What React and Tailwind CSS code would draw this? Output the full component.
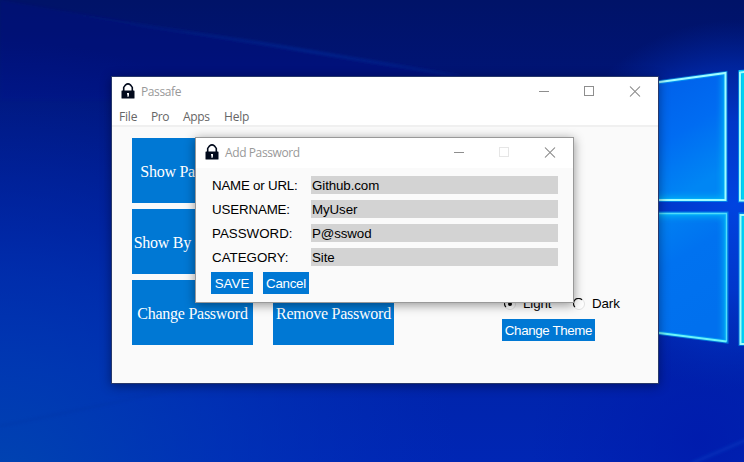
import React from 'react';

function Wallpaper() {
  return (
    <svg className="absolute inset-0" width="744" height="462" viewBox="0 0 744 462">
      <defs>
        <linearGradient id="sky" x1="0" y1="0" x2="0" y2="1">
          <stop offset="0" stopColor="#001368" />
          <stop offset="0.18" stopColor="#001476" />
          <stop offset="0.5" stopColor="#001790" />
          <stop offset="0.8" stopColor="#0024aa" />
          <stop offset="1" stopColor="#0026b4" />
        </linearGradient>
        <radialGradient id="corner" gradientUnits="userSpaceOnUse" cx="0" cy="500" r="460">
          <stop offset="0" stopColor="#0048b0" stopOpacity="0.95" />
          <stop offset="0.5" stopColor="#0038b8" stopOpacity="0.6" />
          <stop offset="1" stopColor="#0030b8" stopOpacity="0" />
        </radialGradient>
        <radialGradient id="glow" gradientUnits="userSpaceOnUse" cx="735" cy="205" r="185">
          <stop offset="0" stopColor="#0044e0" />
          <stop offset="0.45" stopColor="#003cd4" stopOpacity="0.85" />
          <stop offset="0.75" stopColor="#0034c4" stopOpacity="0.5" />
          <stop offset="1" stopColor="#002cb0" stopOpacity="0" />
        </radialGradient>
        <radialGradient id="floor" gradientUnits="userSpaceOnUse" cx="700" cy="440" r="170">
          <stop offset="0" stopColor="#001aac" stopOpacity="0.8" />
          <stop offset="1" stopColor="#001cae" stopOpacity="0" />
        </radialGradient>
        <linearGradient id="paneTop" x1="0" y1="0" x2="0.5" y2="1">
          <stop offset="0" stopColor="#005be6" />
          <stop offset="0.6" stopColor="#006cf2" />
          <stop offset="1" stopColor="#0086f4" />
        </linearGradient>
        <linearGradient id="paneBottom" x1="0" y1="0" x2="0.5" y2="1">
          <stop offset="0" stopColor="#0088f4" />
          <stop offset="0.5" stopColor="#0072f0" />
          <stop offset="1" stopColor="#0070ee" />
        </linearGradient>
        <filter id="soft" x="-20%" y="-20%" width="140%" height="140%">
          <feGaussianBlur stdDeviation="3" />
        </filter>
        <filter id="beam" x="-20%" y="-20%" width="140%" height="140%">
          <feGaussianBlur stdDeviation="1.6" />
        </filter>
        <linearGradient id="beamFade" gradientUnits="userSpaceOnUse" x1="60" y1="0" x2="480" y2="0">
          <stop offset="0" stopColor="#0a36a8" stopOpacity="0" />
          <stop offset="0.6" stopColor="#0a36a8" stopOpacity="0.55" />
          <stop offset="1" stopColor="#0a36a8" stopOpacity="0.2" />
        </linearGradient>
        <clipPath id="panes">
          <path d="M620 87 L726 72 V201 H620Z M620 213 H727 V342 L620 329Z M739 70 H744 V201 H739Z M740 214 H744 V344 H740Z" />
        </clipPath>
      </defs>
      <rect width="744" height="462" fill="url(#sky)" />
      <path d="M0 0 L160 28 L260 43 L350 58 L460 76 V100 H0Z" fill="#00108a" opacity="0.3" filter="url(#beam)" />
      <rect width="744" height="462" fill="url(#corner)" />
      <rect width="744" height="462" fill="url(#floor)" />
      <rect width="744" height="462" fill="url(#glow)" />
      <path d="M60 12 L160 28 L260 43 L350 58 L460 76" fill="none" stroke="url(#beamFade)" strokeWidth="2.5" filter="url(#beam)" />
      <path d="M0 426 Q90 408 200 384" fill="none" stroke="#0030a0" strokeWidth="2" opacity="0.3" filter="url(#beam)" />
      <path d="M690 464 L746 440" fill="none" stroke="#0844c8" strokeWidth="3" opacity="0.4" filter="url(#beam)" />
      <path d="M620 87 L726 72 V201 H620Z" fill="url(#paneTop)" />
      <path d="M620 213 H727 V342 L620 329Z" fill="url(#paneBottom)" />
      <path d="M739 70 H750 V201 H739Z M740 214 H750 V344 H740Z" fill="#00d4f0" />
      <g clipPath="url(#panes)">
        <path d="M726 72 V201 H620 M620 213 H727 V342" fill="none" stroke="#00c8fa" strokeWidth="8" opacity="0.65" filter="url(#soft)" />
      </g>
      <path d="M620 87.5 L725.5 73 V200 H620 M620 213.5 H726.5 V341.5 L620 328 M750 70.5 L740 72 V200.5 H750 M750 214.5 H740.5 V344 H750" fill="none" stroke="#00b4fa" strokeWidth="4" opacity="0.55" />
      <path d="M620 87.5 L725.5 73 V200 H620" fill="none" stroke="#9ffcff" strokeWidth="2" />
      <path d="M750 71 L740 72.5 V200.5 H750 M750 215 H740.5 V344 H750" fill="none" stroke="#a4fff8" strokeWidth="2" />
      <path d="M620 213.5 H726.5 V341.5" fill="none" stroke="#50dcfa" strokeWidth="1.4" />
      <path d="M726.5 341.5 L620 328" fill="none" stroke="#6cf4f8" strokeWidth="2" />
    </svg>
  );
}

function Lock() {
  return (
    <svg className="mt-[6px] block" width="16" height="16" viewBox="0 0 16 16">
      <path d="M3.7 8 V4.4 L5.6 1.8 Q8 0 10.4 1.8 L12.3 4.4 V8" fill="none" stroke="#020a1c" strokeWidth="1.6" />
      <rect x="1.5" y="7.5" width="13" height="8" rx="0.6" fill="#020a1c" />
      <path d="M7 10 H9 V12 L8.6 13.7 H7.4 V12 L7 11Z" fill="#fff" />
    </svg>
  );
}

function Controls({ disabled }) {
  return (
    <svg className="ml-auto block" width="138" height="30" viewBox="0 0 138 30" fill="none" shapeRendering="crispEdges">
      <path d="M19 14.5 H29" stroke="#8e8e8e" />
      <rect x="64.5" y="9.5" width="9" height="9" stroke={disabled ? '#e6e6e6' : '#8e8e8e'} />
      <path d="M110 9.5 L120 19.5 M120 9.5 L110 19.5" stroke="#7c7c7c" strokeWidth="1.05" shapeRendering="auto" />
    </svg>
  );
}

function TitleBar({ title, disabled, spacing }) {
  return (
    <div className="flex h-[30px] bg-white pl-[8px]">
      <Lock />
      <span className={`ml-[5px] font-['Open_Sans','Noto_Sans',sans-serif] text-[12px] leading-[30px] whitespace-nowrap text-[#999999] ${spacing}`}>{title}</span>
      <Controls disabled={disabled} />
    </div>
  );
}

function Tile({ children }) {
  return (
    <button className="flex h-[65px] w-[121px] items-center justify-center overflow-hidden bg-[#0078d4] pt-[3px] font-['Liberation_Serif',serif] text-[16px] leading-[18px] tracking-[-0.26px] whitespace-nowrap text-white">
      {children}
    </button>
  );
}

function Action({ children, width }) {
  return (
    <button className={`flex h-[22px] items-center justify-center bg-[#0078d4] pt-px text-[13.33px] leading-[16px] whitespace-nowrap text-white ${width}`}>
      {children}
    </button>
  );
}

function Radio({ checked }) {
  return (
    <svg width="12" height="12" viewBox="0 0 12 12" className="block">
      <circle cx="6" cy="6" r="5.5" fill="#fff" stroke="#e2e2e2" />
      <path d="M1.9 9 A5 5 0 0 1 9 1.9" fill="none" stroke="#111" strokeWidth="1.3" />
      {checked && <circle cx="6" cy="6" r="2" fill="#000" />}
    </svg>
  );
}

const fields = [
  ['NAME or URL:', 'Github.com', 'tracking-[-0.22px]'],
  ['USERNAME:', 'MyUser', 'tracking-[-0.15px]'],
  ['PASSWORD:', 'P@sswod', 'tracking-[0px]'],
  ['CATEGORY:', 'Site', 'tracking-[0px]'],
];

function MainWindow() {
  return (
    <div className="absolute left-[111px] top-[76px] h-[308px] w-[548px] border border-[#27386b] bg-[#fafafa] bg-clip-padding shadow-[0_2px_10px_rgba(0,0,30,0.45)]">
      <TitleBar title="Passafe" spacing="tracking-[-0.4px]" />
      <div className="flex h-[20px] border-b-2 border-[#f0f0f0] bg-white font-['Open_Sans','Noto_Sans',sans-serif] text-[12px] leading-[20px] text-[#666666]">
        <span className="ml-[7px] w-[32px] tracking-[-0.2px]">File</span>
        <span className="w-[32px] tracking-[-0.4px]">Pro</span>
        <span className="w-[41px] tracking-[-0.3px]">Apps</span>
        <span className="tracking-[-0.2px]">Help</span>
      </div>
      <div className="flex pt-[11px] pl-[20px]">
        <div className="grid grid-cols-[121px_121px] gap-x-[20px] gap-y-[6px]">
          <Tile>Show Passwords</Tile>
          <Tile />
          <Tile>Show By Category</Tile>
          <Tile />
          <Tile>Change Password</Tile>
          <Tile>Remove Password</Tile>
        </div>
        <div className="ml-[108px] flex flex-col items-start pt-[158px]">
          <div className="flex h-[16px] items-center text-[13.33px] leading-[16px] tracking-[-0.1px] text-black">
            <span className="ml-[2px]"><Radio checked /></span>
            <span className="ml-[7px] w-[50px]">Light</span>
            <Radio />
            <span className="ml-[7px]">Dark</span>
          </div>
          <div className="mt-[7px]"><Action width="w-[93px] tracking-[-0.36px]">Change Theme</Action></div>
        </div>
      </div>
    </div>
  );
}

function AddPasswordDialog() {
  return (
    <div className="absolute left-[195px] top-[137px] h-[166px] w-[379px] border border-[#999999] bg-[#fafafa] shadow-[0_2px_10px_rgba(0,0,0,0.42)]">
      <TitleBar title="Add Password" disabled spacing="tracking-[-0.4px]" />
      <div className="flex flex-col gap-[6px] pt-[8px] pl-[15px]">
        {fields.map(([label, value, spacing]) => (
          <div key={label} className="flex h-[18px] text-[13.33px] leading-[19px] whitespace-nowrap text-black">
            <span className={`w-[100px] pl-px ${spacing}`}>{label}</span>
            <span className="w-[247px] bg-[#d3d3d3] pl-px tracking-[-0.1px]">{value}</span>
          </div>
        ))}
        <div className="flex gap-[10px]">
          <Action width="w-[42px]">SAVE</Action>
          <Action width="w-[46px] tracking-[-0.25px]">Cancel</Action>
        </div>
      </div>
    </div>
  );
}

export default function App() {
  return (
    <div className="relative h-[462px] w-[744px] overflow-hidden bg-[#001888] font-['Liberation_Sans',Arial,sans-serif]">
      <Wallpaper />
      <MainWindow />
      <AddPasswordDialog />
    </div>
  );
}
